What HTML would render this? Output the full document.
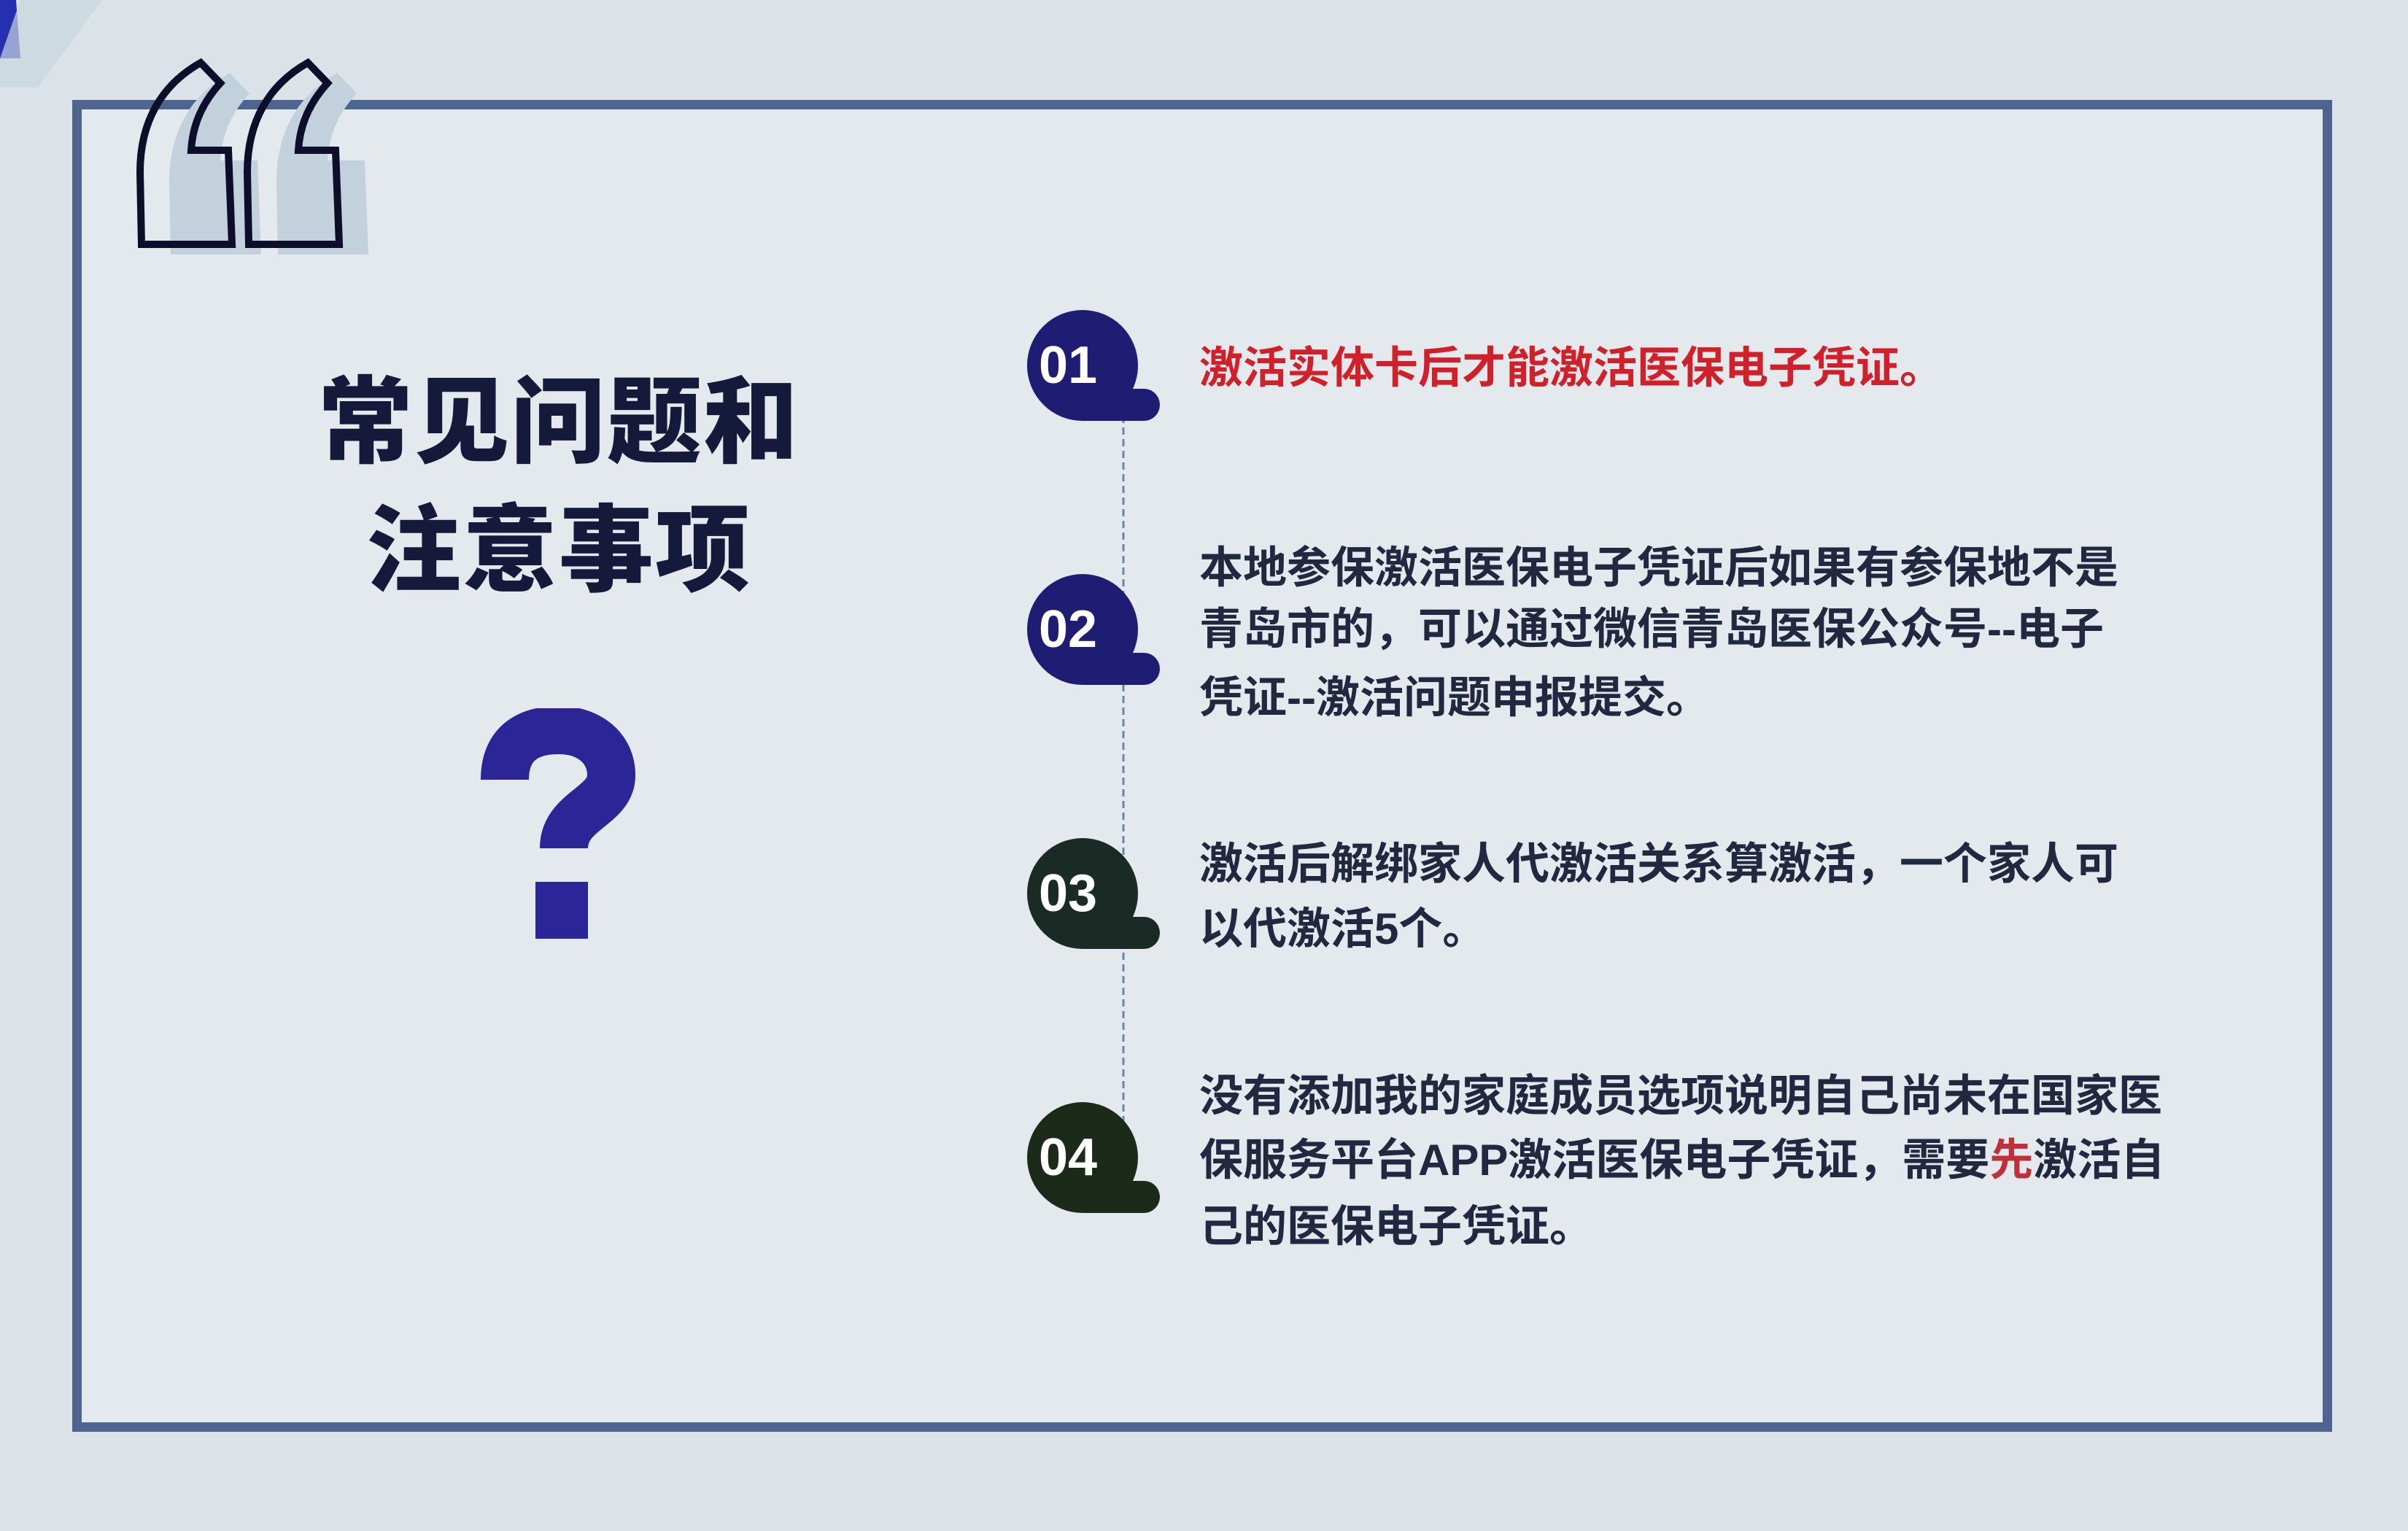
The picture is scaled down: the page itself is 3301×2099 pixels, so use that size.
<!DOCTYPE html>
<html><head><meta charset="utf-8"><style>
html,body{margin:0;padding:0}
body{width:3301px;height:2099px;position:relative;overflow:hidden;background:#dbe3e8;font-family:"Liberation Sans","Noto Sans CJK SC",sans-serif}
.frame{position:absolute;left:99px;top:137px;width:3072px;height:1800px;border:13px solid #4d6590;background:#e3e9ec}
.t{position:absolute;white-space:nowrap;font-weight:bold;font-size:60px;line-height:90px;color:#22283f;letter-spacing:0px}
.title{position:absolute;white-space:nowrap;font-weight:900;font-size:130px;line-height:176px;color:#15193a;text-align:center;width:900px;left:316px;letter-spacing:2px}
.num{position:absolute;color:#fff;font-weight:bold;font-size:72px;line-height:80px}
</style></head><body>
<svg style="position:absolute;left:0;top:0" width="200" height="120"><polygon points="0,0 22,0 28,80 0,80" fill="#2430b0"/><polygon points="28,0 140,0 0,190 0,80" fill="#c9d6e0" opacity="0.7"/></svg>
<div class="frame"></div>
<svg style="position:absolute;left:0;top:0" width="600" height="400">
<defs><path id="q" d="M83 0 L110 28 C86 54 72 84 70 120 L121 120 L126 249 L2 249 L0 150 C0 80 30 30 83 0Z"/></defs>
<g fill="#c3d1dd">
<use href="#q" x="232" y="100"/>
<use href="#q" x="379" y="100"/>
</g>
<g fill="none" stroke="#0d0f2a" stroke-width="10" stroke-linejoin="miter">
<use href="#q" x="192" y="86"/>
<use href="#q" x="339" y="86"/>
</g>
</svg>
<div class="title" style="top:491px">常见问题和</div>
<div class="title" style="top:667px">注意事项</div>
<svg style="position:absolute;left:658px;top:971px" width="215" height="320">
<path d="M34 98 C34 45 70 30 108 30 C150 30 180 55 180 92 C180 135 115 140 115 192" fill="none" stroke="#2b2598" stroke-width="66"/>
<rect x="76" y="238" width="72" height="78" fill="#2b2598"/>
</svg>
<svg style="position:absolute;left:1534px;top:570px" width="12" height="1040"><line x1="6" y1="0" x2="6" y2="1040" stroke="#6b86a8" stroke-width="3" stroke-dasharray="10 6"/></svg>
<svg style="position:absolute;left:1405px;top:425px" width="190" height="1250">
<g><circle cx="79" cy="76" r="76" fill="#1f1c74"/><rect x="80" y="108" width="105" height="44" rx="22" fill="#1f1c74"/><rect x="80" y="108" width="60" height="44" fill="#1f1c74"/></g>
<g transform="translate(0,362)"><circle cx="79" cy="76" r="76" fill="#1f1c74"/><rect x="80" y="108" width="105" height="44" rx="22" fill="#1f1c74"/><rect x="80" y="108" width="60" height="44" fill="#1f1c74"/></g>
<g transform="translate(0,724)"><circle cx="79" cy="76" r="76" fill="#1a2a24"/><rect x="80" y="108" width="105" height="44" rx="22" fill="#1a2a24"/><rect x="80" y="108" width="60" height="44" fill="#1a2a24"/></g>
<g transform="translate(0,1086)"><circle cx="79" cy="76" r="76" fill="#1c2a1a"/><rect x="80" y="108" width="105" height="44" rx="22" fill="#1c2a1a"/><rect x="80" y="108" width="60" height="44" fill="#1c2a1a"/></g>
</svg>
<div class="num" style="left:1424px;top:461px">01</div>
<div class="num" style="left:1424px;top:823px">02</div>
<div class="num" style="left:1424px;top:1185px">03</div>
<div class="num" style="left:1424px;top:1547px">04</div>
<div class="t" style="left:1644px;top:460px;color:#d0202a">激活实体卡后才能激活医保电子凭证。</div>
<div class="t" style="left:1644px;top:734px">本地参保激活医保电子凭证后如果有参保地不是</div>
<div class="t" style="left:1644px;top:818px">青岛市的，可以通过微信青岛医保公众号--电子</div>
<div class="t" style="left:1644px;top:912px">凭证--激活问题申报提交。</div>
<div class="t" style="left:1644px;top:1140px">激活后解绑家人代激活关系算激活，一个家人可</div>
<div class="t" style="left:1644px;top:1229px">以代激活5个。</div>
<div class="t" style="left:1644px;top:1458px">没有添加我的家庭成员选项说明自己尚未在国家医</div>
<div class="t" style="left:1644px;top:1546px">保服务平台APP激活医保电子凭证，需要<span style="color:#c0303a">先</span>激活自</div>
<div class="t" style="left:1644px;top:1637px">己的医保电子凭证。</div>
</body></html>
